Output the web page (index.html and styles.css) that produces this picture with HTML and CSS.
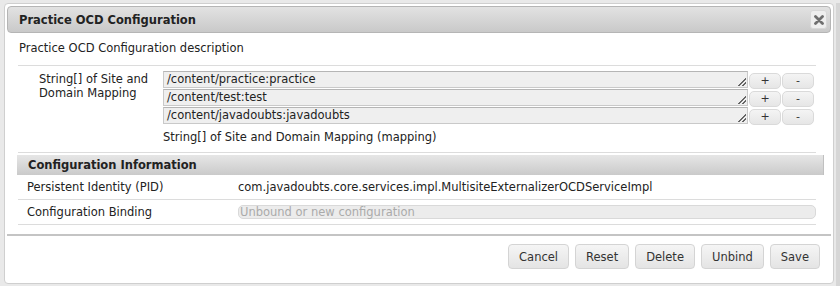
FILE: index.html
```html
<!DOCTYPE html>
<html>
<head>
<meta charset="utf-8">
<link rel="stylesheet" href="styles.css">
</head>
<body>
<div class="page">
  <div class="dialog">
    <div class="titlebar">
      <span class="title">Practice OCD Configuration</span>
      <span class="close"><svg width="10" height="10" viewBox="0 0 10 10"><path d="M1.5 1.5 L8.5 8.5 M8.5 1.5 L1.5 8.5" stroke="#6e6e6e" stroke-width="2.8" stroke-linecap="round"/></svg></span>
    </div>
    <div class="content">
      <p class="desc">Practice OCD Configuration description</p>
      <div class="propsec">
        <div class="proprow">
          <div class="plabel">String[] of Site and<br>Domain Mapping</div>
          <div class="pvalue">
            <div class="entry"><div class="ta">/content/practice:practice<span class="grip"></span></div><button class="pm">+</button><button class="pm">-</button></div>
            <div class="entry"><div class="ta">/content/test:test<span class="grip"></span></div><button class="pm">+</button><button class="pm">-</button></div>
            <div class="entry"><div class="ta">/content/javadoubts:javadoubts<span class="grip"></span></div><button class="pm">+</button><button class="pm">-</button></div>
            <div class="hint">String[] of Site and Domain Mapping (mapping)</div>
          </div>
        </div>
      </div>
      <div class="infohead">Configuration Information</div>
      <div class="inforow"><span class="ilabel">Persistent Identity (PID)</span><span class="ival">com.javadoubts.core.services.impl.MultisiteExternalizerOCDServiceImpl</span></div>
      <div class="inforow"><span class="ilabel">Configuration Binding</span><span class="ibind">Unbound or new configuration</span></div>
    </div>
    <div class="footer">
      <button class="btn">Cancel</button>
      <button class="btn">Reset</button>
      <button class="btn">Delete</button>
      <button class="btn">Unbind</button>
      <button class="btn">Save</button>
    </div>
  </div>
  <div class="scroll"></div>
</div>
</body>
</html>
```
FILE: styles.css
```css
html, body { margin: 0; padding: 0; }
body {
  background: #e9e9e9;
  font-family: "DejaVu Sans", Verdana, sans-serif;
  font-size: 11.5px;
  color: #222;
  width: 840px;
  height: 286px;
  overflow: hidden;
}
.page {
  display: flex;
  padding: 3px 0 0 4px;
  height: 286px;
  box-sizing: border-box;
  gap: 2px;
}
.scroll {
  width: 4px;
  background: #d6d6d6;
}
.dialog {
  width: 830px;
  height: 281px;
  box-sizing: border-box;
  background: #fff;
  border: 1px solid #cfcfcf;
  border-radius: 4px;
  padding: 2px;
  display: flex;
  flex-direction: column;
}
.titlebar {
  height: 27px;
  box-sizing: border-box;
  border: 1px solid #b5b5b5;
  border-radius: 4px;
  background: linear-gradient(#e2e2e2, #c9c9c9);
  display: flex;
  align-items: center;
  justify-content: space-between;
  padding: 0 3px 0 11px;
}
.title { font-weight: bold; font-size: 11.5px; color: #222; }
.close {
  width: 17px; height: 19px;
  border: 1px solid #d8d8d8;
  border-radius: 3px;
  background: #eeeeee;
  display: flex; align-items: center; justify-content: center;
  box-sizing: border-box;
}
.content { padding: 0 10px 0 10px; }
.desc {
  margin: 0;
  padding: 8px 0 10px 1px;
  border-bottom: 1px solid #dcdcdc;
  margin-right: 5px;
  margin-left: 1px;
  line-height: 14px;
}
.propsec {
  padding: 5px 0 4px 0;
  border-bottom: 1px solid #dcdcdc;
  margin: 0 5px 0 1px;
}
.proprow { display: flex; }
.plabel {
  width: 124px;
  padding-left: 21px;
  padding-top: 1px;
  line-height: 14px;
}
.pvalue { flex: 1; }
.entry { display: flex; align-items: flex-start; height: 18px; }
.ta {
  position: relative;
  width: 585px;
  height: 17px;
  box-sizing: border-box;
  border: 1px solid #c9c9c9;
  border-top-color: #b5b5b5;
  background: #efefef;
  padding: 0 4px 0 3px;
  line-height: 15px;
  color: #222;
}
.grip {
  position: absolute; right: 1px; bottom: 1px;
  width: 8px; height: 8px;
  background: linear-gradient(135deg, transparent 48%, #666 48%, #666 58%, transparent 58%, transparent 72%, #666 72%, #666 82%, transparent 82%);
}
.pm {
  width: 32px; height: 16px;
  margin-top: 2px;
  margin-left: 1px;
  border: 1px solid #dadada;
  border-radius: 5px;
  background: linear-gradient(#f4f4f4, #e6e6e6);
  font-family: "DejaVu Sans", sans-serif;
  font-size: 11px;
  line-height: 12px;
  padding: 0;
  color: #333;
}
.hint { padding: 5px 0 4px 0; line-height: 14px; }
.infohead {
  margin-top: 2px;
  height: 20px;
  background: linear-gradient(#e6e6e6, #cacaca);
  border-right: 1px solid #c0c0c0;
  font-weight: bold;
  line-height: 20px;
  padding-left: 11px;
  width: 795px;
}
.inforow {
  display: flex;
  align-items: center;
  height: 24px;
  border-bottom: 1px solid #dcdcdc;
  margin-right: 5px;
  margin-left: 1px;
  padding-left: 9px;
}
.ilabel { width: 211px; }
.ibind {
  width: 578px;
  height: 14px;
  box-sizing: border-box;
  border: 1px solid #d9d9d9;
  border-radius: 5px;
  background: #ececec;
  color: #aaa;
  line-height: 12px;
  padding-left: 1px;
}
.footer {
  margin-top: 9px;
  border-top: 2px solid #c4c4c4;
  display: flex;
  justify-content: flex-end;
  gap: 6px;
  padding: 8px 11px 0 0;
}
.btn {
  height: 25px;
  padding: 0 10px;
  border: 1px solid #d4d4d4;
  border-radius: 4px;
  background: linear-gradient(#f5f5f5, #e4e4e4);
  font-family: "DejaVu Sans", sans-serif;
  font-size: 11.5px;
  color: #333;
}
```
